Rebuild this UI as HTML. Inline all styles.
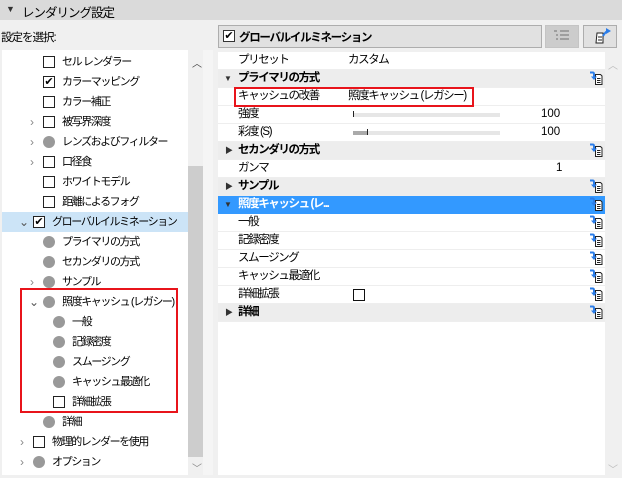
<!DOCTYPE html>
<html><head><meta charset="utf-8"><style>
*{margin:0;padding:0;box-sizing:border-box}
body{width:622px;height:478px;background:#f0f0f0;font-family:"Liberation Sans","Noto Sans CJK JP",sans-serif;font-size:12px;color:#000;position:relative;overflow:hidden}
.abs{position:absolute}
.hdr{left:0;top:0;width:622px;height:20px;background:#dadada;}
.tree{left:2px;top:50px;width:186px;height:425px;background:#fff}
.tr{position:absolute;height:20px;line-height:20px;white-space:nowrap;font-size:11px;letter-spacing:-1.4px}
.cb{position:absolute;width:12px;height:12px;border:1px solid #222;background:#fff;top:4px;letter-spacing:0}
.dot{position:absolute;width:12px;height:12px;border-radius:50%;background:#999;top:4px}
.chev{position:absolute;top:0;color:#888;font-size:12px}
.grid{left:218px;top:52px;width:387px;height:423px;background:#fff}
.row{position:absolute;left:0;width:387px;height:18px;line-height:17px;border-bottom:1px solid #eee;font-size:11.5px;letter-spacing:-1.4px;white-space:nowrap}
.cat{background:#ededed;font-weight:bold}
.ic{position:absolute;left:371px;top:1px}
</style></head><body>
<div class="abs hdr"><span class="abs" style="left:6px;top:4px;font-size:9px;color:#333">▼</span><span class="abs" style="left:22px;top:2px;font-size:12.5px;letter-spacing:-1px">レンダリング設定</span></div>
<div class="abs" style="left:1px;top:29px;font-size:11.5px;letter-spacing:-1px">設定を選択:</div>
<div class="abs tree"></div>
<div class="abs" style="left:188px;top:50px;width:15px;height:425px;background:#f0f0f0"></div>
<div class="abs" style="left:188px;top:166px;width:15px;height:291px;background:#cdcdcd"></div>
<div class="abs" style="left:192px;top:55px;font-size:10px;color:#444">︿</div>
<div class="abs" style="left:192px;top:460px;font-size:10px;color:#888">﹀</div>
<div class="abs" style="left:2px;top:212px;width:186px;height:20px;background:#cce4f7"></div>

<div class="tr" style="left:0;top:52px;width:186px"><span class="cb" style="left:43px"></span><span class="abs" style="left:62px">セル レンダラー</span></div>
<div class="tr" style="left:0;top:72px;width:186px"><span class="cb" style="left:43px;font-size:11px;line-height:10px;text-align:center">✔</span><span class="abs" style="left:62px">カラーマッピング</span></div>
<div class="tr" style="left:0;top:92px;width:186px"><span class="cb" style="left:43px"></span><span class="abs" style="left:62px">カラー補正</span></div>
<div class="tr" style="left:0;top:112px;width:186px"><span class="chev" style="left:30px">›</span><span class="cb" style="left:43px"></span><span class="abs" style="left:62px">被写界深度</span></div>
<div class="tr" style="left:0;top:132px;width:186px"><span class="chev" style="left:30px">›</span><span class="dot" style="left:43px"></span><span class="abs" style="left:62px">レンズおよびフィルター</span></div>
<div class="tr" style="left:0;top:152px;width:186px"><span class="chev" style="left:30px">›</span><span class="cb" style="left:43px"></span><span class="abs" style="left:62px">口径食</span></div>
<div class="tr" style="left:0;top:172px;width:186px"><span class="cb" style="left:43px"></span><span class="abs" style="left:62px">ホワイトモデル</span></div>
<div class="tr" style="left:0;top:192px;width:186px"><span class="cb" style="left:43px"></span><span class="abs" style="left:62px">距離によるフォグ</span></div>
<div class="tr" style="left:0;top:212px;width:186px"><span class="chev" style="left:19px;color:#555">⌄</span><span class="cb" style="left:33px;font-size:11px;line-height:10px;text-align:center">✔</span><span class="abs" style="left:52px">グローバルイルミネーション</span></div>
<div class="tr" style="left:0;top:232px;width:186px"><span class="dot" style="left:43px"></span><span class="abs" style="left:62px">プライマリの方式</span></div>
<div class="tr" style="left:0;top:252px;width:186px"><span class="dot" style="left:43px"></span><span class="abs" style="left:62px">セカンダリの方式</span></div>
<div class="tr" style="left:0;top:272px;width:186px"><span class="chev" style="left:30px">›</span><span class="dot" style="left:43px"></span><span class="abs" style="left:62px">サンプル</span></div>
<div class="tr" style="left:0;top:292px;width:186px"><span class="chev" style="left:29px;color:#555">⌄</span><span class="dot" style="left:43px"></span><span class="abs" style="left:62px">照度キャッシュ (レガシー)</span></div>
<div class="tr" style="left:0;top:312px;width:186px"><span class="dot" style="left:53px"></span><span class="abs" style="left:72px">一般</span></div>
<div class="tr" style="left:0;top:332px;width:186px"><span class="dot" style="left:53px"></span><span class="abs" style="left:72px">記録密度</span></div>
<div class="tr" style="left:0;top:352px;width:186px"><span class="dot" style="left:53px"></span><span class="abs" style="left:72px">スムージング</span></div>
<div class="tr" style="left:0;top:372px;width:186px"><span class="dot" style="left:53px"></span><span class="abs" style="left:72px">キャッシュ最適化</span></div>
<div class="tr" style="left:0;top:392px;width:186px"><span class="cb" style="left:53px"></span><span class="abs" style="left:72px">詳細拡張</span></div>
<div class="tr" style="left:0;top:412px;width:186px"><span class="dot" style="left:43px"></span><span class="abs" style="left:62px">詳細</span></div>
<div class="tr" style="left:0;top:432px;width:186px"><span class="chev" style="left:20px">›</span><span class="cb" style="left:33px"></span><span class="abs" style="left:52px">物理的レンダーを使用</span></div>
<div class="tr" style="left:0;top:452px;width:186px"><span class="chev" style="left:20px">›</span><span class="dot" style="left:33px"></span><span class="abs" style="left:52px">オプション</span></div>
<div class="abs" style="left:20px;top:288px;width:158px;height:125px;border:2px solid #e8141b"></div>

<div class="abs" style="left:203px;top:50px;width:10px;height:425px;background:#f5f5f5"></div>
<div class="abs" style="left:218px;top:25px;width:324px;height:23px;border:1px solid #adadad;background:#e1e1e1"></div>
<div class="abs" style="left:223px;top:30px;width:12px;height:12px;border:1px solid #333;background:#fff;font-size:11px;line-height:10px;text-align:center">✔</div>
<div class="abs" style="left:239px;top:29px;font-size:11.5px;font-weight:bold;letter-spacing:-1.3px">グローバルイルミネーション</div>
<div class="abs" style="left:545px;top:25px;width:34px;height:23px;background:#ccc;border:1px solid #c4c4c4"></div>
<svg class="abs" style="left:553px;top:29px" width="18" height="14"><g stroke="#9e9e9e" stroke-width="2"><path d="M1 2h3M7 2h9M3 6h2M7 6h9M3 10h2M7 10h9"/></g></svg>
<div class="abs" style="left:583px;top:25px;width:34px;height:23px;background:#e1e1e1;border:1px solid #adadad"></div>
<svg class="abs" style="left:595px;top:28px" width="18" height="17"><path d="M2 5h6v10H1z" fill="#fff" stroke="#222"/><path d="M3 9h4M3 12h4" stroke="#222"/><path d="M8 8q3-5 5-5" stroke="#2b7de9" stroke-width="2" fill="none"/><path d="M11 0l5 3-5 3z" fill="#2b7de9"/></svg>

<div class="abs grid"></div>
<div class="abs" style="left:605px;top:52px;width:17px;height:423px;background:#f0f0f0"></div>
<div class="abs" style="left:608px;top:57px;font-size:10px;color:#bbb">︿</div>
<div class="abs" style="left:608px;top:461px;font-size:10px;color:#bbb">﹀</div>

<div class="abs" style="left:218px;top:52px;width:387px;height:290px">
<div class="row" style="top:0"><span class="abs" style="left:20px">プリセット</span><span class="abs" style="left:130px">カスタム</span></div>
<div class="row cat" style="top:18px"><span class="abs" style="left:6px;font-size:8px;color:#333">▼</span><span class="abs" style="left:20px">プライマリの方式</span><svg class="ic" width="14" height="14"><use href="#ri"/></svg></div>
<div class="row" style="top:36px"><span class="abs" style="left:20px">キャッシュの改善</span><span class="abs" style="left:130px">照度キャッシュ (レガシー)</span></div>
<div class="row" style="top:54px"><span class="abs" style="left:20px">強度</span><span class="abs" style="left:135px;top:7px;width:147px;height:4px;background:#e6e6e6"></span><span class="abs" style="left:135px;top:5px;width:1px;height:6px;background:#222"></span><span class="abs" style="left:323px;letter-spacing:0">100</span></div>
<div class="row" style="top:72px"><span class="abs" style="left:20px">彩度 (S)</span><span class="abs" style="left:135px;top:7px;width:147px;height:4px;background:#e6e6e6"></span><span class="abs" style="left:135px;top:7px;width:14px;height:4px;background:#aaa"></span><span class="abs" style="left:149px;top:5px;width:1px;height:6px;background:#222"></span><span class="abs" style="left:323px;letter-spacing:0">100</span></div>
<div class="row cat" style="top:90px"><span class="abs" style="left:7px;font-size:8px;color:#333">▶</span><span class="abs" style="left:20px">セカンダリの方式</span><svg class="ic" width="14" height="14"><use href="#ri"/></svg></div>
<div class="row" style="top:108px"><span class="abs" style="left:20px">ガンマ</span><span class="abs" style="left:338px">1</span></div>
<div class="row cat" style="top:126px"><span class="abs" style="left:7px;font-size:8px;color:#333">▶</span><span class="abs" style="left:20px">サンプル</span><svg class="ic" width="14" height="14"><use href="#ri"/></svg></div>
<div class="row cat" style="top:144px;background:#3399ff;color:#fff;border-color:#3399ff"><span class="abs" style="left:6px;font-size:8px;color:#333">▼</span><span class="abs" style="left:20px">照度キャッシュ (レ...</span><svg class="ic" width="14" height="14"><use href="#ri"/></svg></div>
<div class="row" style="top:162px"><span class="abs" style="left:20px">一般</span><svg class="ic" width="14" height="14"><use href="#ri"/></svg></div>
<div class="row" style="top:180px"><span class="abs" style="left:20px">記録密度</span><svg class="ic" width="14" height="14"><use href="#ri"/></svg></div>
<div class="row" style="top:198px"><span class="abs" style="left:20px">スムージング</span><svg class="ic" width="14" height="14"><use href="#ri"/></svg></div>
<div class="row" style="top:216px"><span class="abs" style="left:20px">キャッシュ最適化</span><svg class="ic" width="14" height="14"><use href="#ri"/></svg></div>
<div class="row" style="top:234px"><span class="abs" style="left:20px">詳細拡張</span><span class="abs" style="left:135px;top:3px;width:12px;height:12px;border:1px solid #111"></span><svg class="ic" width="14" height="14"><use href="#ri"/></svg></div>
<div class="row cat" style="top:252px"><span class="abs" style="left:7px;font-size:8px;color:#333">▶</span><span class="abs" style="left:20px">詳細</span><svg class="ic" width="14" height="14"><use href="#ri"/></svg></div>
</div>
<div class="abs" style="left:234px;top:87px;width:240px;height:20px;border:2px solid #e8141b"></div>
<svg width="0" height="0" style="position:absolute"><defs><g id="ri"><path d="M6.5 3.5h5l1.5 1.5v8.5h-6.5z" fill="#fff" stroke="#222"/><path d="M8 7.5h3.5M8 9.5h3.5M8 11.5h3.5" stroke="#222"/><path d="M1 1.5h3q1 0 1 2v3" stroke="#2b7de9" stroke-width="2" fill="none"/><path d="M2 5.5h6l-3 3.5z" fill="#2b7de9"/></g></defs></svg>
</body></html>
